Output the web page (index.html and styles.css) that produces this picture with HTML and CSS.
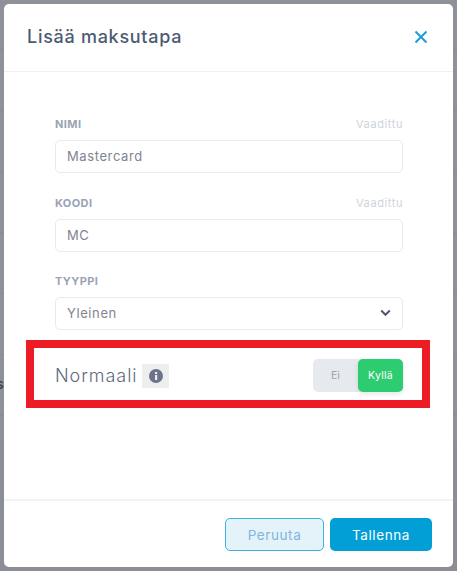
FILE: index.html
```html
<!DOCTYPE html>
<html lang="fi">
<head>
  <meta charset="UTF-8" />
  <meta name="viewport" content="width=device-width, initial-scale=1.0"/>
  <title>Lisää maksutapa</title>
  <link rel="stylesheet" href="styles.css">
</head>
<body>

  <span class="behind-text">s</span>

  <div class="modal">
    <div class="modal-header">
      <h2>Lisää maksutapa</h2>
      <button class="close-btn" aria-label="Sulje">
        <svg width="14" height="14" viewBox="0 0 14 14"><path d="M1.5 1.5 L12.5 12.5 M12.5 1.5 L1.5 12.5" /></svg>
      </button>
    </div>

    <div class="modal-body">
      <div class="field">
        <div class="field-top"><label>NIMI</label><span class="required">Vaadittu</span></div>
        <div class="input">Mastercard</div>
      </div>
      <div class="field">
        <div class="field-top"><label>KOODI</label><span class="required">Vaadittu</span></div>
        <div class="input">MC</div>
      </div>
      <div class="field">
        <div class="field-top"><label>TYYPPI</label></div>
        <div class="input select">
          Yleinen
          <svg width="11" height="8" viewBox="0 0 11 8"><path d="M1.2 1.5 L5.5 5.8 L9.8 1.5" /></svg>
        </div>
      </div>

      <div class="switch-row">
        <div class="switch-label">
          Normaali
          <span class="info">
            <svg width="14" height="14" viewBox="0 0 14 14">
              <circle cx="7" cy="7" r="7" fill="#6b7489" />
              <rect x="6" y="6" width="2.2" height="5" fill="#eee" />
              <rect x="6" y="3" width="2.2" height="2" fill="#eee" />
            </svg>
          </span>
        </div>
        <div class="toggle">
          <span class="toggle-off">Ei</span>
          <span class="toggle-on">Kyllä</span>
        </div>
      </div>
    </div>

    <div class="modal-footer">
      <button class="btn btn-cancel">Peruuta</button>
      <button class="btn btn-save">Tallenna</button>
    </div>
  </div>

  <div class="highlight"></div>

</body>
</html>
```

FILE: styles.css
```css
* {
  margin: 0;
  padding: 0;
  box-sizing: border-box;
}

html {
  background-color: #8b8e96;
}

/* the dimmed table rows behind the dialog */
body {
  font-family: 'Inter', 'Liberation Sans', sans-serif;
  background: repeating-linear-gradient(to bottom, #8e9199 0, #8e9199 60px, #888b93 60px, #888b93 61px) 0 -11px / 100% 452px no-repeat;
  height: 571px;
  padding: 4px;
  overflow: hidden;
  color: #6b7280;
}

.behind-text {
  position: absolute;
  left: -4px;
  top: 375px;
  font-size: 14px;
  font-weight: 600;
  color: #3c4048;
}

.modal {
  position: relative;
  background-color: white;
  border-radius: 5px;
  height: 563px;
  display: flex;
  flex-direction: column;
}

.modal-header {
  display: flex;
  justify-content: space-between;
  align-items: center;
  height: 68px;
  padding: 0 25px 2px 23px;
  border-bottom: 1px solid #eef0f2;
}

.modal-header h2 {
  font-size: 18px;
  font-weight: 500;
  letter-spacing: 0.72px;
  color: #4d5a72;
}

.close-btn {
  background: none;
  border: none;
  display: flex;
}

.close-btn path {
  fill: none;
  stroke: #1a9fd8;
  stroke-width: 2;
}

.modal-body {
  flex: 1;
  padding: 45px 50px 0 51px;
}

.field {
  margin-bottom: 22.5px;
}

.field-top {
  display: flex;
  justify-content: space-between;
  align-items: center;
  height: 14px;
  margin-bottom: 9px;
}

.field-top label {
  font-size: 11px;
  font-weight: 700;
  letter-spacing: 0.4px;
  color: #9aa3b5;
}

.required {
  font-size: 11px;
  letter-spacing: 0.6px;
  color: #cfd2dc;
}

.input {
  display: flex;
  justify-content: space-between;
  align-items: center;
  height: 33px;
  padding: 0 12px 1px 11px;
  border: 1px solid #e8eaf0;
  border-radius: 5px;
  font-size: 13px;
  letter-spacing: 0.6px;
  color: #7f8491;
}

.select svg {
  margin-right: -1px;
}

.select path {
  fill: none;
  stroke: #4d5a72;
  stroke-width: 2;
}

.switch-row {
  display: flex;
  justify-content: space-between;
  align-items: center;
  margin-top: 29px;
  height: 33px;
}

.switch-label {
  display: flex;
  align-items: center;
  gap: 5px;
  font-size: 18px;
  font-weight: 300;
  letter-spacing: 0.95px;
  color: #5f6b80;
}

.info {
  display: flex;
  justify-content: center;
  align-items: center;
  width: 27px;
  height: 24px;
  background-color: #eeeeee;
}

.toggle {
  display: flex;
  width: 90px;
  height: 33px;
  background-color: #e6e9ee;
  border-radius: 5px;
  font-size: 10.5px;
}

.toggle span {
  display: flex;
  justify-content: center;
  align-items: center;
  width: 45px;
}

.toggle-off {
  color: #9aa3b5;
}

.toggle-on {
  background-color: #2ecc71;
  color: white;
  letter-spacing: 0.3px;
  border-radius: 5px;
  box-shadow: 0 2px 5px rgba(0, 0, 0, 0.1);
}

.modal-footer {
  display: flex;
  justify-content: flex-end;
  gap: 6px;
  height: 68px;
  padding: 17px 21px 0 0;
  border-top: 2px solid #f2f3f4;
}

.btn {
  height: 33px;
  border-radius: 5px;
  font-family: inherit;
  font-size: 13.5px;
  letter-spacing: 0.6px;
}

.btn-cancel {
  width: 99px;
  background-color: #e4f2fa;
  border: 1px solid #3db2e0;
  color: #82b5dc;
}

.btn-save {
  width: 102px;
  background-color: #019fd6;
  border: none;
  color: white;
}

/* red annotation over the screenshot */
.highlight {
  position: absolute;
  left: 26px;
  top: 340px;
  width: 404px;
  height: 68px;
  border: 8px solid #ed1c24;
}
```
